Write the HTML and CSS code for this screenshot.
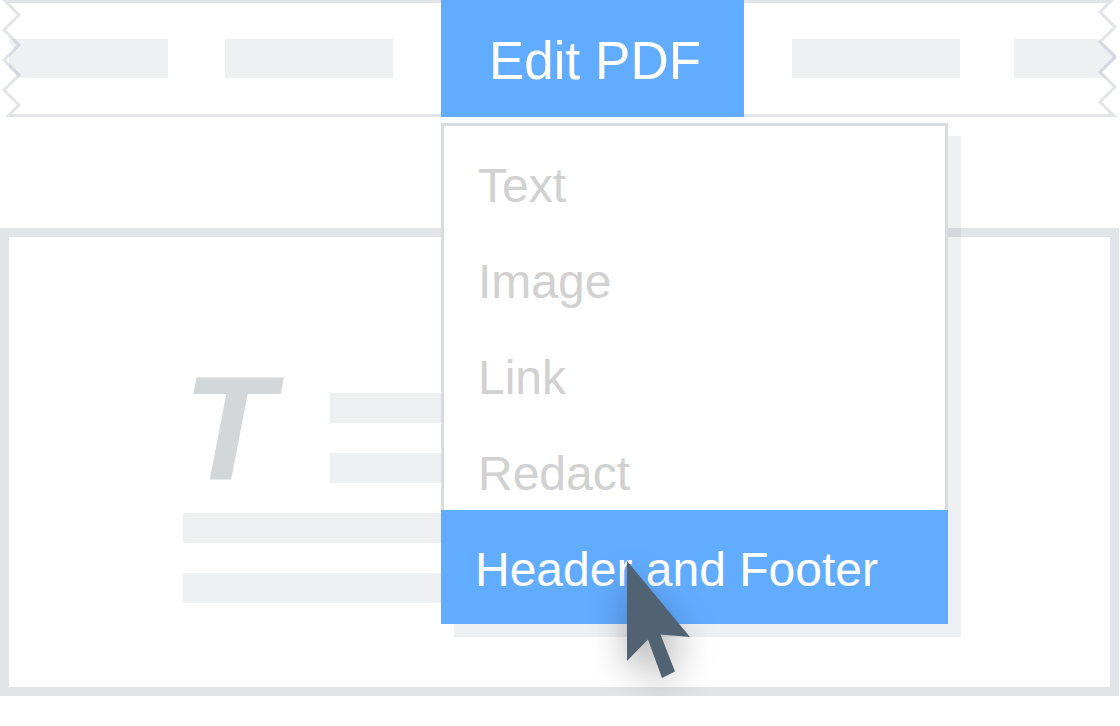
FILE: index.html
```html
<!DOCTYPE html>
<html lang="en">
<head>
    <meta charset="UTF-8">
    <meta name="viewport" content="width=device-width, initial-scale=1.0">
    <title>Edit PDF</title>
    <link rel="stylesheet" href="styles.css">
</head>
<body>

    <!-- Toolbar -->
    <header class="toolbar">
        <svg class="torn-edge" width="22" height="117" viewBox="0 0 22 117" aria-hidden="true">
            <path class="edge-fill" d="M9 39H22V78H19L9 68V55L15 49L9 43Z"/>
            <path class="edge-line" d="M5 1.5H22M3 -1L19 15L4 30L19 45L4 60L19 75L4 90L19 105L8.500 115.500H22"/>
        </svg>
        <nav class="toolbar-items">
            <span class="tab tab-first"></span>
            <span class="tab"></span>
            <div class="dropdown">
                <button type="button" class="tab-active" aria-haspopup="true" aria-expanded="true">Edit PDF</button>
                <div class="menu" role="menu">
                    <button type="button" class="menu-item" role="menuitem">Text</button>
                    <button type="button" class="menu-item" role="menuitem">Image</button>
                    <button type="button" class="menu-item" role="menuitem">Link</button>
                    <button type="button" class="menu-item" role="menuitem">Redact</button>
                    <button type="button" class="menu-item selected" role="menuitem">Header and Footer</button>
                    <svg class="cursor" width="63" height="117" viewBox="0 0 63 117" aria-hidden="true">
                        <path d="M0 0L63 76L33.500 73.500L48 110.500L35 117L21 78.500L0 100Z"/>
                    </svg>
                </div>
            </div>
            <span class="tab"></span>
            <span class="tab tab-last"></span>
        </nav>
        <svg class="torn-edge" width="22" height="117" viewBox="0 0 22 117" aria-hidden="true">
            <path class="edge-fill" d="M0 39H2L19 54V59L5 73L10 78H0Z"/>
            <path class="edge-line" d="M0 1.500H14M16 -1L3 12L18 27L3 42L18 57L3 72L18 87L3 102L16.500 115.500H0"/>
        </svg>
    </header>

    <!-- Document page -->
    <main class="document">
        <div class="intro">
            <div class="drop-cap">T</div>
            <div class="lines">
                <span class="line"></span>
                <span class="line"></span>
            </div>
        </div>
        <div class="lines">
            <span class="line"></span>
            <span class="line"></span>
        </div>
    </main>

</body>
</html>
```

FILE: styles.css
```css
* {
    box-sizing: border-box;
}
body {
    font-family: "Liberation Sans", Arial, sans-serif;
    margin: 0 1px 0 0;
    background-color: #fff;
}
button {
    font-family: inherit;
    border: 0;
    margin: 0;
    text-align: left;
    white-space: nowrap;
    cursor: pointer;
}

/* Toolbar */
.toolbar {
    display: flex;
}
.torn-edge {
    flex: none;
    display: block;
}
.edge-fill {
    fill: #eff0f2;
}
.edge-line {
    fill: none;
    stroke: rgba(83, 93, 117, 0.17);
    stroke-width: 3;
}
.toolbar-items {
    flex: 1;
    min-width: 0;
    display: flex;
    align-items: center;
    height: 117px;
    background: linear-gradient(#e2e4e8, #e2e4e8) top / 100% 3px no-repeat,
                linear-gradient(#e2e4e8, #e2e4e8) bottom / 100% 3px no-repeat;
}
.tab {
    flex: none;
    width: 168px;
    height: 39px;
    background-color: #eff0f2;
}
.tab-first {
    width: 146px;
    margin-right: 57px;
}
.tab-last {
    flex: 1;
    min-width: 0;
    margin-left: 54px;
}
.dropdown {
    position: relative;
    margin: 0 48px;
}
.tab-active {
    display: block;
    height: 117px;
    padding: 3px 43px 0 48px;
    background-color: #62acff;
    color: #fff;
    font-size: 53px;
}

/* Menu */
.menu {
    position: absolute;
    top: 123px;
    left: 0;
    width: 507px;
    background-color: #fff;
    border: 3px solid #d8dbe0;
    border-bottom: 0;
    box-shadow: 13px 13px 0 rgba(77, 88, 110, 0.09);
}
.menu-item {
    display: block;
    width: 100%;
    padding: 24px 34px 0;
    background-color: #fff;
    color: #d1d1d1;
    font-size: 48px;
    line-height: 72px;
}
.menu-item.selected {
    width: auto;
    min-width: calc(100% + 6px);
    margin: 0 -3px;
    padding-bottom: 18px;
    background-color: #62acff;
    color: #fff;
}
.cursor {
    position: absolute;
    left: 183px;
    bottom: -54px;
    overflow: visible;
    fill: #516273;
    filter: drop-shadow(0 14px 18px rgba(0, 0, 0, 0.3));
    pointer-events: none;
}

/* Document page */
.document {
    margin-top: 111px;
    padding: 156px 174px 84px;
    border: 9px solid #e2e4e8;
}
.intro {
    display: flex;
    margin-bottom: 30px;
}
.drop-cap {
    width: 147px;
    color: #d3d7da;
    font-size: 148px;
    font-weight: bold;
    font-style: italic;
    line-height: 72px;
}
.lines {
    flex: 1;
    display: flex;
    flex-direction: column;
    gap: 30px;
    max-width: 600px;
}
.line {
    height: 30px;
    background-color: #eeeff1;
}
```
